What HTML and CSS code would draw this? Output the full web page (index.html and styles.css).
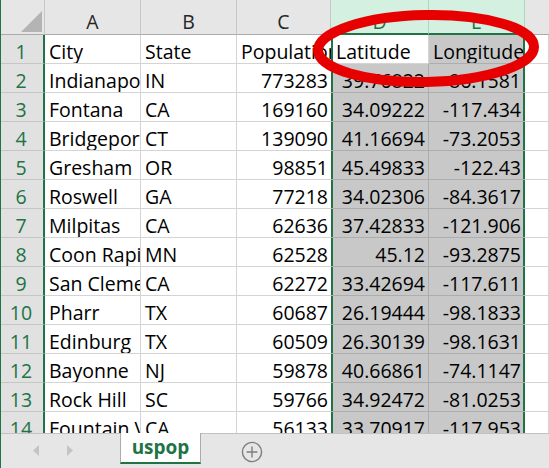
FILE: index.html
```html
<!DOCTYPE html>
<html>
<head>
<meta charset="utf-8">
<link rel="stylesheet" href="styles.css">
</head>
<body>
<div class="app">
  <div class="sheet">
    <div class="grid">
      <div class="corner"><svg width="21" height="21" viewBox="0 0 21 21"><polygon points="0,21 21,21 21,0" fill="#b4b4b4"/></svg></div>
      <div class="ch">A</div>
      <div class="ch">B</div>
      <div class="ch">C</div>
      <div class="ch sel">D</div>
      <div class="ch sel">E</div>
      <div class="ch last"></div>

      <div class="rh">1</div><div class="c">City</div><div class="c">State</div><div class="c cc">Population</div><div class="c dd">Latitude</div><div class="c ee s">Longitude</div><div class="c"></div>
      <div class="rh">2</div><div class="c">Indianapolis</div><div class="c">IN</div><div class="c cc n">773283</div><div class="c dd s n">39.76822</div><div class="c ee s n">-86.1581</div><div class="c"></div>
      <div class="rh">3</div><div class="c">Fontana</div><div class="c">CA</div><div class="c cc n">169160</div><div class="c dd s n">34.09222</div><div class="c ee s n">-117.434</div><div class="c"></div>
      <div class="rh">4</div><div class="c">Bridgeport</div><div class="c">CT</div><div class="c cc n">139090</div><div class="c dd s n">41.16694</div><div class="c ee s n">-73.2053</div><div class="c"></div>
      <div class="rh">5</div><div class="c">Gresham</div><div class="c">OR</div><div class="c cc n">98851</div><div class="c dd s n">45.49833</div><div class="c ee s n">-122.43</div><div class="c"></div>
      <div class="rh">6</div><div class="c">Roswell</div><div class="c">GA</div><div class="c cc n">77218</div><div class="c dd s n">34.02306</div><div class="c ee s n">-84.3617</div><div class="c"></div>
      <div class="rh">7</div><div class="c">Milpitas</div><div class="c">CA</div><div class="c cc n">62636</div><div class="c dd s n">37.42833</div><div class="c ee s n">-121.906</div><div class="c"></div>
      <div class="rh">8</div><div class="c">Coon Rapids</div><div class="c">MN</div><div class="c cc n">62528</div><div class="c dd s n">45.12</div><div class="c ee s n">-93.2875</div><div class="c"></div>
      <div class="rh">9</div><div class="c">San Clemente</div><div class="c">CA</div><div class="c cc n">62272</div><div class="c dd s n">33.42694</div><div class="c ee s n">-117.611</div><div class="c"></div>
      <div class="rh">10</div><div class="c">Pharr</div><div class="c">TX</div><div class="c cc n">60687</div><div class="c dd s n">26.19444</div><div class="c ee s n">-98.1833</div><div class="c"></div>
      <div class="rh">11</div><div class="c">Edinburg</div><div class="c">TX</div><div class="c cc n">60509</div><div class="c dd s n">26.30139</div><div class="c ee s n">-98.1631</div><div class="c"></div>
      <div class="rh">12</div><div class="c">Bayonne</div><div class="c">NJ</div><div class="c cc n">59878</div><div class="c dd s n">40.66861</div><div class="c ee s n">-74.1147</div><div class="c"></div>
      <div class="rh">13</div><div class="c">Rock Hill</div><div class="c">SC</div><div class="c cc n">59766</div><div class="c dd s n">34.92472</div><div class="c ee s n">-81.0253</div><div class="c"></div>
      <div class="rh">14</div><div class="c">Fountain Valley</div><div class="c">CA</div><div class="c cc n">56133</div><div class="c dd s n">33.70917</div><div class="c ee s n">-117.953</div><div class="c"></div>
    </div>
  </div>
  <div class="tabs">
    <div class="nav">
      <svg width="6" height="11" viewBox="0 0 6 11"><polygon points="6,0 0,5.5 6,11" fill="#c4c4c4"/></svg>
      <svg width="6" height="11" viewBox="0 0 6 11"><polygon points="0,0 6,5.5 0,11" fill="#c4c4c4"/></svg>
    </div>
    <div class="tab">uspop</div>
    <svg class="add" width="22" height="22" viewBox="0 0 22 22"><circle cx="11" cy="11" r="9.6" fill="none" stroke="#7d7d7d" stroke-width="1.4"/><path d="M11 5.6V16.4M5.6 11H16.4" stroke="#7d7d7d" stroke-width="1.4"/></svg>
  </div>
  <svg class="mark" width="549" height="468" viewBox="0 0 549 468"><ellipse cx="426" cy="48.5" rx="108" ry="33.5" transform="rotate(-1 426 48.5)" fill="none" stroke="#e60000" stroke-width="10"/></svg>
</div>
</body>
</html>
```
FILE: styles.css
```css
* { box-sizing: border-box; }
html, body { margin: 0; padding: 0; background: #fff; }
.app {
  position: relative;
  width: 549px;
  height: 468px;
  overflow: hidden;
  border-left: 1px solid #217346;
  font-family: "Open Sans", "Noto Sans", sans-serif;
  font-size: 19.5px;
  color: #000;
}
.sheet { height: 433px; overflow: hidden; }
.grid {
  display: grid;
  grid-template-columns: 44px 96px 96px 94px 98px 96px 1fr;
  grid-template-rows: 35px;
  grid-auto-rows: 29px;
}
.grid > div {
  display: flex;
  align-items: flex-end;
  overflow: hidden;
  white-space: nowrap;
  line-height: 23px;
}
.corner {
  background: #e6e6e6;
  border-right: 1px solid #c6c6c6;
  border-bottom: 1px solid #ababab;
  justify-content: flex-end;
  padding: 0 2px 2px 0;
}
.corner svg { display: block; }
.ch {
  background: #e6e6e6;
  color: #262626;
  justify-content: center;
  border-right: 1px solid #c6c6c6;
  border-bottom: 1px solid #ababab;
  padding-bottom: 1px;
}
.ch.sel {
  background: #d3f0e0;
  color: #217346;
  border-right-color: #a9d8bd;
  border-bottom: 2px solid #217346;
  padding-bottom: 0;
}
.ch.last { border-right: 0; }
.rh {
  background: #e1e1e1;
  color: #217346;
  justify-content: center;
  border-right: 2px solid #217346;
  border-bottom: 1px solid #c6c6c6;
  padding-right: 2px;
}
.c {
  border-right: 1px solid #d4d4d4;
  border-bottom: 1px solid #d4d4d4;
  padding: 0 3px 0 4px;
}
.c.n { justify-content: flex-end; }
.c.cc { border-right: 0; }
.c.dd { box-shadow: inset 2px 0 0 #217346; padding-left: 5px; }
.c.ee { border-right: 0; box-shadow: inset -2px 0 0 #217346; padding-right: 4px; }
.c.s { background: #c8c8c8; border-bottom-color: #adadad; }
.c.dd.s { border-right-color: #adadad; }
.tabs {
  height: 35px;
  background: #e6e6e6;
  border-top: 1px solid #c2c2c2;
  display: flex;
  align-items: flex-start;
}
.nav {
  width: 119px;
  flex: none;
  display: flex;
  gap: 28px;
  padding: 11px 0 0 32px;
}
.nav svg { display: block; }
.tab {
  flex: none;
  width: 81px;
  height: 31px;
  margin-top: -1px;
  background: #fff;
  border-left: 1px solid #ababab;
  border-right: 1px solid #ababab;
  border-bottom: 2px solid #217346;
  color: #217346;
  font-weight: 700;
  font-size: 19px;
  display: flex;
  align-items: center;
  justify-content: center;
  padding-bottom: 1px;
}
.add { display: block; margin: 7px 0 0 40px; }
.mark { position: absolute; left: -1px; top: 0; pointer-events: none; }
```
